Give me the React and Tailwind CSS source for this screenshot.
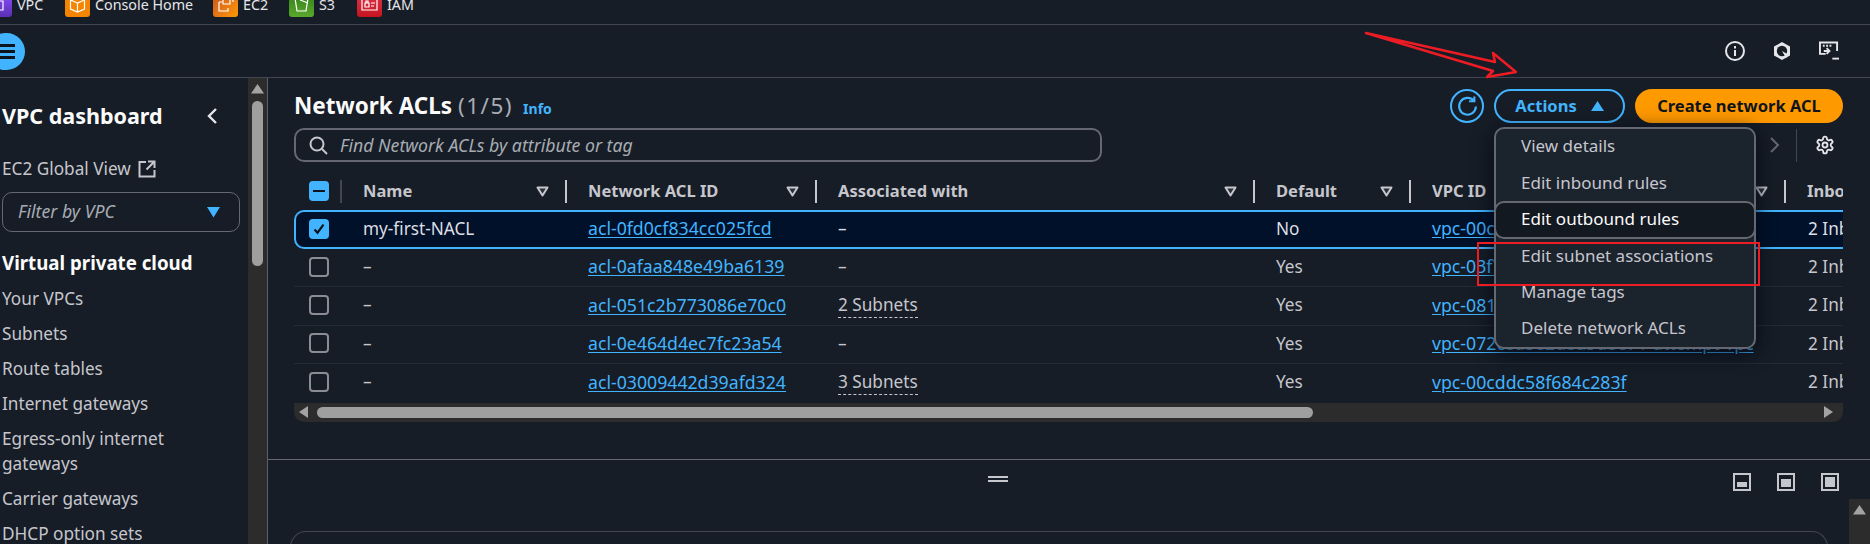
import React from "react";

const Caret = () => (
  <svg width="13" height="11" viewBox="0 0 13 11" className="shrink-0">
    <path d="M1.5 1.5h10L6.5 9.5z" fill="#2a3038" stroke="#c6c6cd" strokeWidth="2" strokeLinejoin="round" />
  </svg>
);

const Sep = () => <div className="w-[2px] h-[23px] bg-[#c6c6cd] shrink-0" />;

const cols = [
  { w: "w-[225px]", label: "Name" },
  { w: "w-[250px]", label: "Network ACL ID" },
  { w: "w-[438px]", label: "Associated with" },
  { w: "w-[156px]", label: "Default" },
  { w: "w-[375px]", label: "VPC ID" },
];

const Checkbox = ({ state }) => {
  if (state === "dash")
    return (
      <div className="w-[20px] h-[20px] rounded-[4px] bg-[#42b4ff] flex items-center justify-center">
        <div className="w-[12px] h-[2px] bg-[#0f141a]" />
      </div>
    );
  if (state === "check")
    return (
      <div className="w-[20px] h-[20px] rounded-[4px] bg-[#42b4ff] flex items-center justify-center">
        <svg width="14" height="14" viewBox="0 0 14 14">
          <path d="M2.5 7.5l3 3.2 6-8" fill="none" stroke="#0f141a" strokeWidth="2.2" />
        </svg>
      </div>
    );
  return <div className="w-[20px] h-[20px] rounded-[4px] border-2 border-[#8c8c94]" />;
};

const rows = [
  { name: "my-first-NACL", id: "acl-0fd0cf834cc025fcd", assoc: "–", def: "No", vpc: "vpc-00cddc58f684c283f", sel: true },
  { name: "–", id: "acl-0afaa848e49ba6139", assoc: "–", def: "Yes", vpc: "vpc-03f7c2b8d1e4a6950" },
  { name: "–", id: "acl-051c2b773086e70c0", assoc: "2 Subnets", def: "Yes", vpc: "vpc-081e5d4a7c3b92f10" },
  { name: "–", id: "acl-0e464d4ec7fc23a54", assoc: "–", def: "Yes", vpc: "vpc-072c8a5e2d8a3d8e7 / attempt-vpc" },
  { name: "–", id: "acl-03009442d39afd324", assoc: "3 Subnets", def: "Yes", vpc: "vpc-00cddc58f684c283f" },
];

const Link = ({ children }) => <a className="text-[17.700px] text-[#42b4ff] underline underline-offset-2 whitespace-nowrap">{children}</a>;

const Row = ({ r }) => (
  <div
    className={
      r.sel
        ? "flex items-center h-[39px] pb-[2px] w-[1700px] bg-[#001129] border-y-2 border-l-2 border-[#42b4ff] rounded-l-[10px] text-[17.2px] text-[#dedee3]"
        : "flex items-center h-[38.4px] pb-[2px] w-[1700px] border-b border-[#232b37] last:border-b-0 text-[17.2px] text-[#c6c6cd]"
    }
  >
    <div className={r.sel ? "w-[46px] pl-[13px] shrink-0" : "w-[48px] pl-[15px] shrink-0"}>
      <Checkbox state={r.sel ? "check" : "none"} />
    </div>
    <div className="w-[225px] pl-[21px] shrink-0">{r.name}</div>
    <div className="w-[250px] pl-[21px] shrink-0"><Link>{r.id}</Link></div>
    <div className="w-[438px] pl-[21px] shrink-0">
      {r.assoc === "–" ? "–" : <span className="border-b border-dashed border-[#c6c6cd] pb-px">{r.assoc}</span>}
    </div>
    <div className="w-[156px] pl-[21px] shrink-0">{r.def}</div>
    <div className="w-[376px] pl-[21px] shrink-0"><Link>{r.vpc}</Link></div>
    <div className="pl-[21px] shrink-0 whitespace-nowrap">2 Inbound rules</div>
  </div>
);

const Tile = ({ bg, children }) => (
  <div className={`w-[25px] h-[25px] rounded-[3px] shrink-0 flex items-center justify-center ${bg}`}>
    <svg width="21" height="21" viewBox="0 0 21 21" fill="none" stroke="#fff" strokeWidth="1.2">{children}</svg>
  </div>
);

const services = [
  { label: "VPC", tw: "w-[28px]", bg: "bg-gradient-to-b from-[#8c4fff] to-[#5a30b5]", icon: <path d="M7 7h7v9H7zM10 7v9" /> },
  { label: "Console Home", tw: "w-[98px]", bg: "bg-[#f58400]", icon: <path d="M10.5 3l7 3v9l-7 3-7-3V6zM3.5 6l7 3 7-3M10.5 9v9" /> },
  { label: "EC2", tw: "w-[26px]", bg: "bg-gradient-to-br from-[#c8511b] to-[#ff9900]", icon: <path d="M8 4h7v6H8zM12 2h6v6M4 8h3M4 8v9h9v-3" /> },
  { label: "S3", tw: "w-[18px]", bg: "bg-gradient-to-b from-[#2e7d18] to-[#5ba82c]", icon: <path d="M4 4h13l-2 13H6zM9 6l8 3" /> },
  { label: "IAM", tw: "w-[26px]", bg: "bg-gradient-to-b from-[#dd344c] to-[#c7131f]", icon: <path d="M3 5h15v11H3zM6 9h4v4H6zM7 9V7h2v2M12 9h4M12 12h3" /> },
];

const sideLinks = ["Your VPCs", "Subnets", "Route tables", "Internet gateways", "Egress-only internet gateways", "Carrier gateways", "DHCP option sets"];

const Sidebar = () => (
  <aside className="w-[248px] shrink-0 pl-[2px] pr-[8px] pt-[22px] overflow-hidden text-[17.2px] text-[#c6c6cd]">
    <div className="flex items-center justify-between h-[32px] pr-[21px]">
      <span className="text-[21.5px] font-bold text-[#fbfbfb] whitespace-nowrap">VPC dashboard</span>
      <svg width="14" height="18" viewBox="0 0 14 18" fill="none" stroke="#e6e6ea" strokeWidth="2.4"><path d="M11 2L4 9l7 7" /></svg>
    </div>
    <div className="flex items-center gap-[7px] h-[25px] mt-[24px]">
      EC2 Global View
      <svg width="18" height="18" viewBox="0 0 18 18" fill="none" stroke="#c6c6cd" strokeWidth="2"><path d="M8 2H1.5v14.500h15V10M10 1.500h6.500V8M16 2L8.500 9.500" /></svg>
    </div>
    <div className="mt-[11px] h-[40px] w-[238px] rounded-[10px] border border-[#656871] flex items-center justify-between pl-[15px] pr-[19px] pb-[2px] italic text-[17.700px] text-[#a8acb3]">
      Filter by VPC
      <svg width="13" height="11" viewBox="0 0 13 11" className="mt-[2px]"><path d="M0 0h13L6.500 10.500z" fill="#42b4ff" /></svg>
    </div>
    <div className="mt-[18px] text-[18.700px] font-bold text-[#fbfbfb] leading-[25px] whitespace-nowrap">Virtual private cloud</div>
    <ul className="mt-[11px] flex flex-col gap-[10px] leading-[25px]">
      {sideLinks.map((l) => <li key={l} className="max-w-[200px]">{l}</li>)}
    </ul>
  </aside>
);

const VScrollbar = () => (
  <div className="w-[20px] shrink-0 bg-[#2c2c2c] flex flex-col items-center pt-[6px] border-r border-[#5a5f69] pr-px">
    <svg width="13" height="10" viewBox="0 0 13 10"><path d="M6.500 0L13 9.500H0z" fill="#a3a3a3" /></svg>
    <div className="w-[11px] h-[165px] rounded-full bg-[#9f9f9f] mt-[7px]" />
  </div>
);

const Dropdown = () => (
  <div className="absolute left-[1226px] top-[49px] w-[262px] h-[222px] rounded-[10px] border-2 border-[#656871] bg-[#1b232d] shadow-[0_4px_20px_rgba(0,7,22,0.85)] text-[17px] text-[#c6c6cd] z-10">
    <div className="-mt-[1.500px]">
      <div className="h-[36.500px] pl-[25px] flex items-center">View details</div>
      <div className="h-[36.500px] pl-[25px] flex items-center">Edit inbound rules</div>
      <div className="-mx-[2px] h-[38px] pl-[25px] pb-[2px] flex items-center rounded-[10px] border-2 border-[#656871] bg-[#131920] text-[#fbfbfb]">Edit outbound rules</div>
      <div className="h-[35px] pl-[25px] flex items-center">Edit subnet associations</div>
      <div className="h-[36px] pl-[25px] flex items-center">Manage tags</div>
      <div className="h-[37px] pl-[25px] flex items-center">Delete network ACLs</div>
    </div>
  </div>
);

const Table = () => (
  <div className="relative mt-[13px] ml-[26px] mr-[27px]">
    <div className="flex items-center h-[35px] pb-[3px] text-[16.500px] font-bold text-[#c6c6cd] overflow-hidden">
      <div className="w-[48px] shrink-0 pl-[15px] flex items-center justify-between">
        <Checkbox state="dash" />
        <div className="w-[2px] h-[23px] bg-[#424650]" />
      </div>
      {cols.map((c) => (
        <div key={c.label} className={`${c.w} shrink-0 pl-[21px] flex items-center justify-between`}>
          <span className="whitespace-nowrap">{c.label}</span>
          <div className="flex items-center gap-[16px]"><Caret /><Sep /></div>
        </div>
      ))}
      <div className="pl-[21px] shrink-0 whitespace-nowrap">Inbound rules</div>
    </div>
    <div className="overflow-hidden">
      {rows.map((r) => <Row key={r.id} r={r} />)}
    </div>
    <div className="h-[19px] bg-[#2c2c2c] rounded-b-[10px] flex items-center justify-between pl-[5px] pr-[9px]">
      <div className="flex items-center gap-[8px] flex-1">
        <svg width="10" height="12" viewBox="0 0 10 12" className="shrink-0"><path d="M9 0v12L0 6z" fill="#a3a3a3" /></svg>
        <div className="w-[996px] h-[11px] rounded-full bg-[#9f9f9f]" />
      </div>
      <svg width="10" height="12" viewBox="0 0 10 12"><path d="M0 0v12l9-6z" fill="#a3a3a3" /></svg>
    </div>
  </div>
);

const PanelIcon = ({ fill }) => (
  <div className="w-[18px] h-[18px] border-[2px] border-[#c6c6cd] flex items-end p-[2px]">
    <div className="w-full bg-[#c6c6cd]" style={{ height: fill }} />
  </div>
);

export default function App() {
  return (
    <div className="relative w-[1870px] h-[544px] overflow-hidden bg-[#161d26] font-['Noto_Sans',sans-serif] text-[#c6c6cd] text-[17.200px]">
      <header className="h-[25px] border-b border-[#424650] overflow-hidden flex items-end pb-[7px]">
        <div className="flex items-center gap-[20px] -ml-[13px]">
          {services.map((s) => (
            <div key={s.label} className="flex items-center gap-[5px]">
              <Tile bg={s.bg}>{s.icon}</Tile>
              <span className={`${s.tw} text-[14.300px] text-[#e6e6ea] whitespace-nowrap`}>{s.label}</span>
            </div>
          ))}
        </div>
      </header>

      <div className="h-[53px] border-b border-[#424650] flex items-center justify-between pr-[31px]">
        <div className="w-[38px] h-[37px] -ml-[13px] rounded-full bg-[#42b4ff] flex flex-col items-center justify-center gap-[3px]">
          <div className="w-[16px] h-[3px] ml-[2px] bg-[#0f141a]" />
          <div className="w-[16px] h-[3px] ml-[2px] bg-[#0f141a]" />
          <div className="w-[16px] h-[3px] ml-[2px] bg-[#0f141a]" />
        </div>
        <div className="flex items-center gap-[27px]">
          <svg width="20" height="20" viewBox="0 0 20 20" fill="none" stroke="#e6e6ea" strokeWidth="2"><circle cx="10" cy="10" r="9" /><path d="M10 9v6M10 5v2.500" /></svg>
          <svg width="20" height="20" viewBox="0 0 20 20"><path d="M10 1l8 4.600v8.800L10 19l-8-4.600V5.600z" fill="#e6e6ea" /><circle cx="10" cy="10" r="5.200" fill="#161d26" /><path d="M10 10l7 4-3 3z" fill="#e6e6ea" /></svg>
          <svg width="20" height="20" viewBox="0 0 21 20" fill="none" stroke="#e6e6ea" strokeWidth="2"><path d="M7 13H1V1h18v9" /><path d="M4 4.500h10" strokeDasharray="2 1.500" /><path d="M5 10h6M8 7l3 3-3 3" /><path d="M14 18h7" /></svg>
        </div>
      </div>

      <div className="flex h-[466px]">
        <Sidebar />
        <VScrollbar />
        <main className="flex-1 min-w-0 flex flex-col">
          <section className="relative h-[382px] border-b border-[#656871] pt-[11px]">
            <div className="flex items-center justify-between h-[34px] pl-[26px] pr-[27px]">
              <div className="flex items-baseline gap-[8px]">
                <h1 className="text-[22.500px] font-bold text-[#fbfbfb] whitespace-nowrap">Network ACLs <span className="font-normal tracking-[1.500px] text-[#a8acb3]">(1/5)</span></h1>
                <span className="ml-[2px] text-[14px] font-bold text-[#42b4ff]">Info</span>
              </div>
              <div className="flex items-center gap-[10px]">
                <div className="w-[34px] h-[34px] rounded-full border-2 border-[#42b4ff] flex items-center justify-center">
                  <svg width="21" height="21" viewBox="0 0 20 20" fill="none" stroke="#42b4ff" strokeWidth="2"><path d="M16 4.500A8 8 0 1 0 18 10" /><path d="M11.500 5H16.500V0.500" /></svg>
                </div>
                <div className="w-[131px] h-[34px] rounded-full border-2 border-[#42b4ff] flex items-center justify-center gap-[14px] text-[16.500px] font-bold text-[#42b4ff]">
                  Actions
                  <svg width="13" height="10" viewBox="0 0 13 10"><path d="M6.500 0L13 10H0z" fill="#42b4ff" /></svg>
                </div>
                <div className="w-[208px] h-[34px] rounded-full bg-[#ff9900] flex items-center justify-center text-[16.500px] font-bold text-[#0f141a] whitespace-nowrap">Create network ACL</div>
              </div>
            </div>
            <div className="flex items-center mt-[5px] pl-[26px] pr-[35px] h-[34px]">
              <div className="w-[808px] h-[34px] rounded-[10px] border-2 border-[#656871] flex items-center gap-[12px] pl-[13px] italic text-[17.700px] text-[#a8acb3] whitespace-nowrap">
                <svg width="19" height="19" viewBox="0 0 19 19" fill="none" stroke="#c6c6cd" strokeWidth="2"><circle cx="8" cy="8" r="6.500" /><path d="M12.500 12.500L18 18" /></svg>
                Find Network ACLs by attribute or tag
              </div>
              <div className="flex items-center ml-auto">
                <svg width="11" height="18" viewBox="0 0 11 18" fill="none" stroke="#656871" strokeWidth="2"><path d="M2 2l7 7-7 7" /></svg>
                <div className="w-px h-[33px] bg-[#424650] ml-[16px] mr-[18px]" />
                <svg width="20" height="20" viewBox="0 0 24 24" fill="none" stroke="#e6e6ea" strokeWidth="2.200"><path d="M12.220 2h-.440a2 2 0 0 0-2 2v.180a2 2 0 0 1-1 1.730l-.430.250a2 2 0 0 1-2 0l-.150-.080a2 2 0 0 0-2.730.730l-.220.380a2 2 0 0 0 .730 2.730l.150.100a2 2 0 0 1 1 1.720v.510a2 2 0 0 1-1 1.740l-.150.090a2 2 0 0 0-.730 2.730l.220.380a2 2 0 0 0 2.730.730l.150-.080a2 2 0 0 1 2 0l.430.250a2 2 0 0 1 1 1.730V20a2 2 0 0 0 2 2h.440a2 2 0 0 0 2-2v-.180a2 2 0 0 1 1-1.730l.430-.250a2 2 0 0 1 2 0l.150.080a2 2 0 0 0 2.730-.730l.220-.390a2 2 0 0 0-.730-2.730l-.150-.080a2 2 0 0 1-1-1.740v-.500a2 2 0 0 1 1-1.740l.150-.090a2 2 0 0 0 .730-2.730l-.220-.380a2 2 0 0 0-2.730-.730l-.150.080a2 2 0 0 1-2 0l-.430-.250a2 2 0 0 1-1-1.730V4a2 2 0 0 0-2-2z" /><circle cx="12" cy="12" r="3" /></svg>
              </div>
            </div>
            <Table />
            <Dropdown />
          </section>
          <section className="flex-1 min-h-0 flex flex-col">
            <div className="relative h-[39px] flex items-center justify-end gap-[26px] pr-[31px] pt-[4px]">
              <div className="absolute left-[720px] top-[16px] w-[20px] flex flex-col gap-[2px]">
                <div className="h-[2px] bg-[#c6c6cd]" />
                <div className="h-[2px] bg-[#c6c6cd]" />
              </div>
              <PanelIcon fill="5px" />
              <PanelIcon fill="8px" />
              <PanelIcon fill="10px" />
            </div>
            <div className="flex-1 flex min-h-0">
              <div className="flex-1 pt-[32px] pl-[22px] pr-[21px]">
                <div className="h-[40px] rounded-t-[16px] border-t border-x border-[#424650]" />
              </div>
              <div className="w-[21px] bg-[#2c2c2c] flex justify-center pt-[6px] shrink-0">
                <svg width="13" height="10" viewBox="0 0 13 10"><path d="M6.500 0L13 9.500H0z" fill="#a3a3a3" /></svg>
              </div>
            </div>
          </section>
        </main>
      </div>

      {/* annotations */}
      <div className="absolute left-[1477px] top-[242px] w-[283px] h-[44px] border-[2px] border-[#ed1c24] z-20" />
      <svg className="absolute left-[1360px] top-[25px] z-20" width="165" height="60" viewBox="1360 25 165 60" fill="none" stroke="#ed1c24" strokeWidth="2.500" strokeLinejoin="round">
        <path d="M1366 33L1495 62L1493 53L1516 72L1487 77L1493 71Z" />
      </svg>
    </div>
  );
}
